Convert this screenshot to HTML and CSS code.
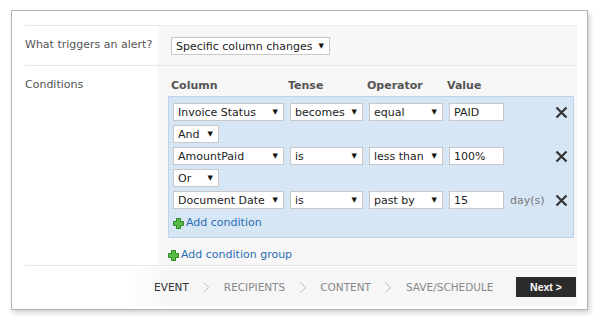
FILE: index.html
```html
<!DOCTYPE html>
<html lang="en">

<head>
  <meta charset="UTF-8">
  <title>Alert settings</title>
  <link rel="stylesheet" href="styles.css">
</head>

<body>

  <div class="dialog">
    <div class="form">
      <!-- Trigger -->
      <div class="row">
        <div class="label">What triggers an alert?</div>
        <div class="field field-trigger">
          <span class="sel w-trigger"><select><option>Specific column changes</option></select></span>
        </div>
      </div>

      <!-- Conditions -->
      <div class="row">
        <div class="label">Conditions</div>
        <div class="field">
          <div class="heads">
            <span class="w-col">Column</span>
            <span class="w-tense">Tense</span>
            <span class="w-op">Operator</span>
            <span>Value</span>
          </div>

          <div class="group">
            <div class="cond">
              <span class="sel w-col"><select><option>Invoice Status</option></select></span>
              <span class="sel w-tense"><select><option>becomes</option></select></span>
              <span class="sel w-op"><select><option>equal</option></select></span>
              <input class="value" type="text" value="PAID">
              <button class="remove" title="Remove"><svg width="13" height="13" viewBox="0 0 13 13"><path d="M1.5 1.5L11.5 11.5M11.5 1.5L1.5 11.5" stroke="#333" stroke-width="2.2" fill="none"/></svg></button>
            </div>
            <div class="join">
              <span class="sel w-join"><select><option>And</option></select></span>
            </div>
            <div class="cond">
              <span class="sel w-col"><select><option>AmountPaid</option></select></span>
              <span class="sel w-tense"><select><option>is</option></select></span>
              <span class="sel w-op"><select><option>less than</option></select></span>
              <input class="value" type="text" value="100%">
              <button class="remove" title="Remove"><svg width="13" height="13" viewBox="0 0 13 13"><path d="M1.5 1.5L11.5 11.5M11.5 1.5L1.5 11.5" stroke="#333" stroke-width="2.2" fill="none"/></svg></button>
            </div>
            <div class="join">
              <span class="sel w-join"><select><option>Or</option></select></span>
            </div>
            <div class="cond">
              <span class="sel w-col"><select><option>Document Date</option></select></span>
              <span class="sel w-tense"><select><option>is</option></select></span>
              <span class="sel w-op"><select><option>past by</option></select></span>
              <input class="value" type="text" value="15">
              <span class="unit">day(s)</span>
              <button class="remove" title="Remove"><svg width="13" height="13" viewBox="0 0 13 13"><path d="M1.5 1.5L11.5 11.5M11.5 1.5L1.5 11.5" stroke="#333" stroke-width="2.2" fill="none"/></svg></button>
            </div>
            <a class="add" href="#"><svg width="11" height="11" viewBox="0 0 11 11"><path d="M3.5 0.5H7.5V3.5H10.5V7.5H7.5V10.5H3.5V7.5H0.5V3.5H3.5Z" fill="#58b947" stroke="#2e8a22"/></svg>Add condition</a>
          </div>

          <a class="add add-group" href="#"><svg width="11" height="11" viewBox="0 0 11 11"><path d="M3.5 0.5H7.5V3.5H10.5V7.5H7.5V10.5H3.5V7.5H0.5V3.5H3.5Z" fill="#58b947" stroke="#2e8a22"/></svg>Add condition group</a>
        </div>
      </div>
    </div>

    <!-- Wizard steps -->
    <div class="footer">
      <div class="steps">
        <span class="step current">EVENT</span>
        <svg class="chev" width="6" height="11" viewBox="0 0 6 11"><path d="M0.5 0.5L5.5 5.5L0.5 10.5" stroke="#bbb" fill="none"/></svg>
        <span class="step">RECIPIENTS</span>
        <svg class="chev" width="6" height="11" viewBox="0 0 6 11"><path d="M0.5 0.5L5.5 5.5L0.5 10.5" stroke="#bbb" fill="none"/></svg>
        <span class="step">CONTENT</span>
        <svg class="chev" width="6" height="11" viewBox="0 0 6 11"><path d="M0.5 0.5L5.5 5.5L0.5 10.5" stroke="#bbb" fill="none"/></svg>
        <span class="step">SAVE/SCHEDULE</span>
        <button class="next">Next &gt;</button>
      </div>
    </div>
  </div>

</body>

</html>
```

FILE: styles.css
```css
body {
  font-family: "DejaVu Sans", Verdana, sans-serif;
  font-size: 11px;
  background-color: #fff;
  margin: 0;
  padding: 10px 11px;
}

.dialog {
  width: 552px;
  padding: 14px 10px 3px 13px;
  background-color: #fff;
  border: 1px solid #b3b3b3;
  box-shadow: 2px 3px 5px rgba(0, 0, 0, 0.18);
}

.form {
  border-top: 1px solid #e8e8e8;
}

.row {
  display: grid;
  grid-template-columns: 133px 1fr;
  border-bottom: 1px solid #e8e8e8;
}

.label {
  padding-top: 12px;
  line-height: 14px;
  color: #555;
}

.field {
  background-color: #f7f7f7;
  padding: 13px 3px 2px 10px;
}

.field-trigger {
  padding: 11px 0 10px 13px;
}

/* fake dropdowns: native select without chrome, arrow drawn after */
.sel {
  position: relative;
  display: inline-block;
  height: 18px;
  flex: none;
}

.sel select {
  appearance: none;
  -webkit-appearance: none;
  width: 100%;
  height: 18px;
  margin: 0;
  padding: 0 0 0 4px;
  border: 1px solid #c8c8c8;
  border-radius: 0;
  background-color: #fff;
  font-family: inherit;
  font-size: 11px;
  color: #222;
}

.sel::after {
  content: "\25BC";
  position: absolute;
  right: 6px;
  top: 5px;
  font-size: 7px;
  line-height: 8px;
  color: #111;
  pointer-events: none;
}

.w-trigger { width: 159px; }
.w-col { width: 111px; }
.w-tense { width: 73px; }
.w-op { width: 74px; }
.w-join { width: 46px; }

.heads {
  display: flex;
  gap: 6px;
  padding-left: 3px;
  line-height: 14px;
  font-weight: bold;
  color: #555;
  margin-bottom: 3px;
}

.heads span {
  flex: none;
}

.group {
  background-color: #d6e6f5;
  border: 1px solid #bcd3ea;
  padding: 6px 5px 6px 4px;
  display: flex;
  flex-direction: column;
  gap: 4px;
}

.cond {
  display: flex;
  align-items: center;
  gap: 6px;
}

.join {
  display: flex;
}

.value {
  width: 55px;
  height: 18px;
  box-sizing: border-box;
  margin: 0;
  padding: 0 0 0 4px;
  border: 1px solid #c8c8c8;
  font-family: inherit;
  font-size: 11px;
  color: #222;
}

.unit {
  color: #777;
}

.remove {
  margin-left: auto;
  padding: 0;
  border: none;
  background: none;
  width: 13px;
  height: 13px;
  cursor: pointer;
}

.add {
  display: flex;
  align-items: center;
  gap: 2px;
  line-height: 16px;
  margin-top: 2px;
  color: #2a6db3;
  font-size: 11px;
  text-decoration: none;
}

.add-group {
  margin-top: 9px;
}

.footer {
  display: flex;
  justify-content: flex-end;
  margin-top: 1px;
}

.steps {
  display: flex;
  align-items: center;
  gap: 14.5px;
  padding: 10px 1px 9px 25px;
  background: linear-gradient(to right, rgba(246, 246, 246, 0), #f6f6f6 40px);
}

.step {
  font-size: 10.5px;
  color: #888;
}

.step.current {
  color: #333;
}

.next {
  margin-left: 8px;
  width: 60px;
  height: 20px;
  padding: 0;
  border: none;
  background-color: #2b2b2b;
  color: #fff;
  font-family: "Liberation Sans", Arial, sans-serif;
  font-weight: bold;
  font-size: 10.5px;
  cursor: pointer;
}
```
